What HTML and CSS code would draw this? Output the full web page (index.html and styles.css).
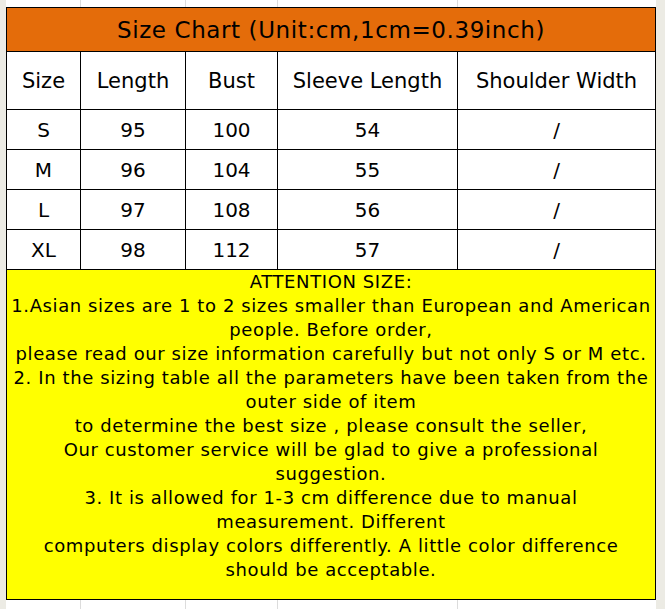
FILE: index.html
```html
<!DOCTYPE html>
<html>
<head>
<meta charset="utf-8">
<link rel="stylesheet" href="styles.css">
</head>
<body>
<div class="sheet">
  <div class="gap gap-top"><span></span><span></span><span></span><span></span><span></span></div>
  <div class="chart">
    <div class="title">Size Chart (Unit:cm,1cm=0.39inch)</div>
    <div class="cell head">Size</div>
    <div class="cell head">Length</div>
    <div class="cell head">Bust</div>
    <div class="cell head">Sleeve Length</div>
    <div class="cell head">Shoulder Width</div>

    <div class="cell">S</div><div class="cell">95</div><div class="cell">100</div><div class="cell">54</div><div class="cell">/</div>
    <div class="cell">M</div><div class="cell">96</div><div class="cell">104</div><div class="cell">55</div><div class="cell">/</div>
    <div class="cell">L</div><div class="cell">97</div><div class="cell">108</div><div class="cell">56</div><div class="cell">/</div>
    <div class="cell">XL</div><div class="cell">98</div><div class="cell">112</div><div class="cell">57</div><div class="cell">/</div>

    <div class="note">
      <div>ATTENTION SIZE:</div>
      <div>1.Asian sizes are 1 to 2 sizes smaller than European and American</div>
      <div>people. Before order,</div>
      <div>please read our size information carefully but not only S or M etc.</div>
      <div>2. In the sizing table all the parameters have been taken from the</div>
      <div>outer side of item</div>
      <div>to determine the best size , please consult the seller,</div>
      <div>Our customer service will be glad to give a professional</div>
      <div>suggestion.</div>
      <div>3. It is allowed for 1-3 cm difference due to manual</div>
      <div>measurement. Different</div>
      <div>computers display colors differently. A little color difference</div>
      <div>should be acceptable.</div>
    </div>
  </div>
  <div class="gap gap-bottom"><span></span><span></span><span></span><span></span><span></span></div>
</div>
</body>
</html>
```

FILE: styles.css
```css
html, body {
  margin: 0;
  padding: 0;
  background: #ecebe4;
}

body {
  width: 665px;
  height: 609px;
  overflow: hidden;
  font-family: "DejaVu Sans", sans-serif;
  color: #000;
}

.sheet {
  margin-left: 6px;
  width: 650px;
  background: #fff;
}

.gap {
  display: grid;
  grid-template-columns: 74px 105px 92px 180px 198px;
  padding-left: 1px;
}

.gap span {
  box-sizing: border-box;
  border-right: 1px solid #dcdcdc;
}

.gap span:last-child {
  border-right: none;
}

.gap-top { height: 7px; }
.gap-bottom { height: 10px; }

.chart {
  display: grid;
  grid-template-columns: 74px 105px 92px 180px 198px;
  grid-template-rows: 44px 58px 40px 40px 40px 40px 330px;
  border-left: 1px solid #000;
  border-top: 1px solid #000;
}

.title,
.cell,
.note {
  box-sizing: border-box;
  border-right: 1px solid #000;
  border-bottom: 1px solid #000;
}

.title {
  grid-column: 1 / -1;
  background: #e46c0a;
  display: flex;
  align-items: center;
  justify-content: center;
  font-size: 23px;
  letter-spacing: 0.6px;
}

.cell {
  display: flex;
  align-items: center;
  justify-content: center;
  font-size: 20px;
  white-space: nowrap;
}

.cell.head {
  font-size: 21px;
}

.note {
  grid-column: 1 / -1;
  background: #ffff00;
  font-size: 18px;
  line-height: 24px;
  letter-spacing: 0.6px;
  text-align: center;
  white-space: nowrap;
}
```
